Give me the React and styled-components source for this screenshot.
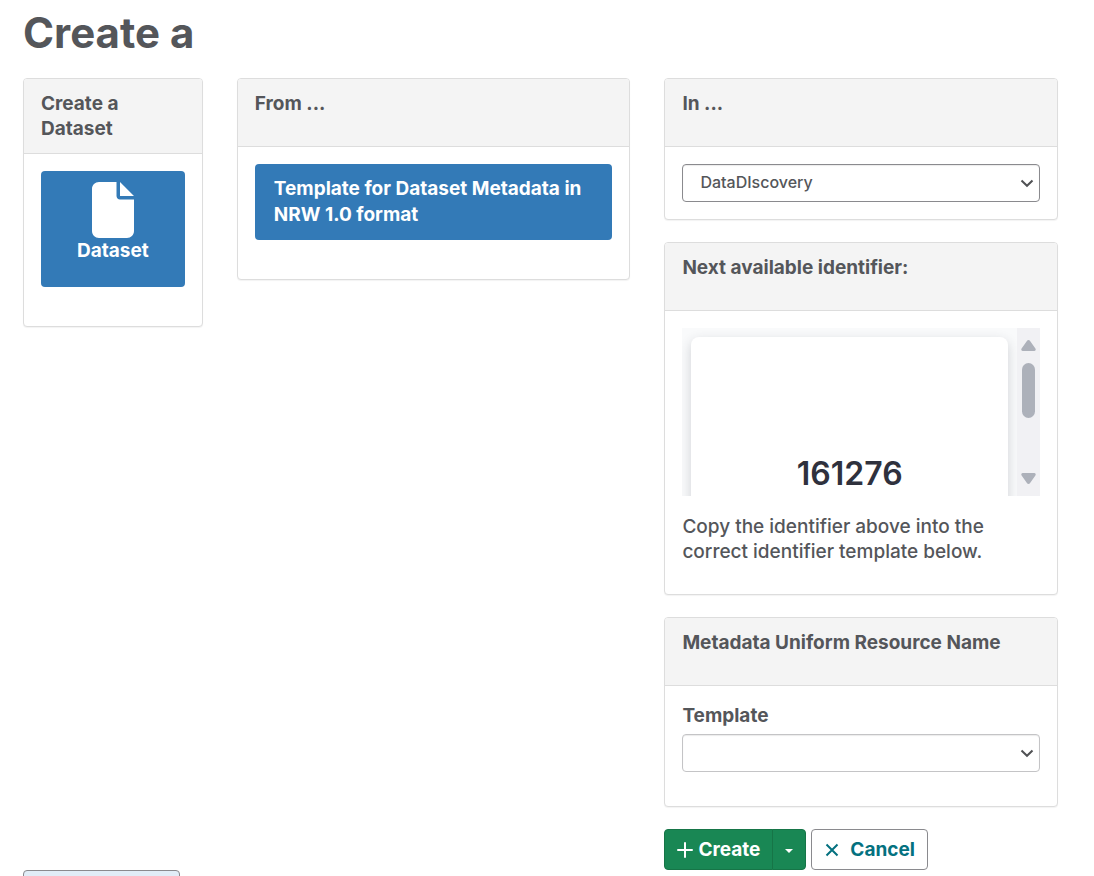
import React from "react";
import styled, { createGlobalStyle } from "styled-components";

const GlobalStyle = createGlobalStyle`
  *, *::before, *::after { box-sizing: border-box; }
  body {
    margin: 0;
    background: #fff;
    color: #54565a;
    font: 500 19px/25px Inter, "Liberation Sans", sans-serif;
  }
  button, select { font: inherit; color: inherit; }
`;

const Page = styled.main`
  padding: 10px 19px 0 6px;
`;

const Title = styled.h1`
  margin: 0 17px 22px;
  font-size: 42px;
  line-height: 46px;
  font-weight: 700;
`;

const Columns = styled.div`
  display: grid;
  grid-template-columns: minmax(0, 1fr) minmax(0, 2fr) minmax(0, 2fr);
  align-items: start;
`;

const Column = styled.div`
  padding: 0 17px;
`;

const Panel = styled.section`
  margin-bottom: 22px;
  border: 1px solid #ddd;
  border-radius: 4px;
  background: #fff;
  box-shadow: 0 1px 1px rgba(0, 0, 0, 0.05);
`;

const PanelHeading = styled.h2`
  margin: 0;
  min-height: 68px;
  padding: 12px 17px;
  border-bottom: 1px solid #ddd;
  border-radius: 3px 3px 0 0;
  background: #f4f4f4;
  font-size: 19px;
  line-height: 25px;
  font-weight: 700;
`;

const PanelBody = styled.div`
  padding: 17px 17px ${(p) => p.$bottom || 17}px;
`;

const KindButton = styled.button`
  display: flex;
  flex-direction: column;
  align-items: center;
  width: 100%;
  height: 116px;
  padding: 11px 17px;
  border: 0;
  border-radius: 4px;
  background: #337ab7;
  color: #fff;
  font-weight: 700;
`;

const FileIcon = styled.svg`
  width: 42px;
  height: 56px;
`;

const TemplateButton = styled.button`
  display: block;
  width: 100%;
  padding: 12px 19px;
  border: 0;
  border-radius: 4px;
  background: #337ab7;
  color: #fff;
  font-weight: 700;
  line-height: 26px;
  text-align: left;
`;

const SelectBox = styled.div`
  display: grid;
  grid-template-columns: 1fr 20px;
  align-items: center;
`;

const Select = styled.select`
  grid-area: 1 / 1 / 2 / 3;
  width: 100%;
  height: 38px;
  padding: 0 17px 2px;
  border: 1px solid ${(p) => (p.$strong ? "#8a8a8e" : "#c4c4c6")};
  border-radius: 4px;
  background: #fff;
  box-shadow: inset 0 1px 1px rgba(0, 0, 0, 0.08);
  font-size: 16px;
  appearance: none;
`;

const Chevron = styled.svg`
  grid-area: 1 / 2 / 2 / 3;
  width: 14px;
  height: 10px;
  pointer-events: none;
`;

const Label = styled.label`
  display: block;
  margin-bottom: 6px;
  font-weight: 700;
`;

const Viewer = styled.div`
  display: flex;
  height: 168px;
  margin-bottom: 18px;
  overflow: hidden;
  background: #f9fafb;
`;

const Sheet = styled.div`
  display: flex;
  flex: 1;
  justify-content: center;
  height: 260px;
  margin: 9px 9px 0;
  padding-top: 119px;
  border-radius: 8px;
  background: #fff;
  box-shadow: 0 4px 12px rgba(45, 50, 66, 0.2);
  color: #2f313d;
  font-size: 32px;
  line-height: 36px;
  font-weight: 600;
`;

const ScrollTrack = styled.div`
  display: flex;
  flex-direction: column;
  align-items: center;
  width: 23px;
  padding: 12px 0;
  background: #f1f1f4;
`;

const ScrollThumb = styled.div`
  width: 13px;
  height: 55px;
  margin: 12px 0 55px;
  border-radius: 7px;
  background: #adb1ba;
`;

const ScrollArrow = styled.svg`
  width: 15px;
  height: 11px;
  fill: #adb1ba;
`;

const Hint = styled.p`
  margin: 0;
`;

const Actions = styled.div`
  display: flex;
  gap: 5px;
`;

const SplitButton = styled.div`
  display: flex;
`;

const ActionButton = styled.button`
  display: flex;
  align-items: center;
  justify-content: center;
  gap: ${(p) => p.$gap || 5}px;
  height: 41px;
  padding: 0 12px;
  border: 1px solid #8a8a8e;
  border-radius: 4px;
  background: #fff;
  color: #04717f;
  font-weight: 700;
`;

const CreateButton = styled(ActionButton)`
  border-color: #167547;
  border-radius: 4px 0 0 4px;
  background: #198754;
  color: #fff;
`;

const CreateMenuButton = styled(CreateButton)`
  width: 34px;
  margin-left: -1px;
  padding: 0;
  border-radius: 0 4px 4px 0;
`;

const Glyph = styled.svg`
  flex: none;
  width: 16px;
  height: 16px;
`;

const FooterButton = styled.button`
  display: block;
  width: 157px;
  height: 41px;
  margin: 0 17px;
  border: 1px solid #8a8a8e;
  border-radius: 4px;
  background: #e1edf7;
`;

function DropDown({ id, label, strong, options }) {
  return (
    <SelectBox>
      <Select id={id} aria-label={label} $strong={strong}>
        {options.map((o) => (
          <option key={o}>{o}</option>
        ))}
      </Select>
      <Chevron viewBox="0 0 14 10" aria-hidden="true">
        <path d="M1.500 2.500 7 7.800 12.500 2.500" fill="none" stroke="#505154" strokeWidth="2" />
      </Chevron>
    </SelectBox>
  );
}

export default function App() {
  return (
    <>
      <GlobalStyle />
      <Page>
        <Title>Create a</Title>
        <Columns>
          <Column>
            <Panel>
              <PanelHeading>Create a Dataset</PanelHeading>
              <PanelBody $bottom={39}>
                <KindButton type="button">
                  <FileIcon viewBox="0 0 384 512" aria-hidden="true">
                    <path
                      fill="currentColor"
                      d="M224 0v128c0 17.700 14.300 32 32 32h128v288c0 35.300-28.700 64-64 64H64c-35.300 0-64-28.700-64-64V64C0 28.700 28.700 0 64 0h160zm32 0 128 128H256V0z"
                    />
                  </FileIcon>
                  Dataset
                </KindButton>
              </PanelBody>
            </Panel>
          </Column>
          <Column>
            <Panel>
              <PanelHeading>From ...</PanelHeading>
              <PanelBody $bottom={39}>
                <TemplateButton type="button">
                  Template for Dataset Metadata in NRW 1.0 format
                </TemplateButton>
              </PanelBody>
            </Panel>
          </Column>
          <Column>
            <Panel>
              <PanelHeading>In ...</PanelHeading>
              <PanelBody>
                <DropDown label="In" strong options={["DataDIscovery"]} />
              </PanelBody>
            </Panel>
            <Panel>
              <PanelHeading>Next available identifier:</PanelHeading>
              <PanelBody $bottom={30}>
                <Viewer>
                  <Sheet>161276</Sheet>
                  <ScrollTrack>
                    <ScrollArrow viewBox="0 0 15 11" aria-hidden="true">
                      <path d="M7.500 0q1 0 1.600 1l5.300 7.500q1 2-1 2.500H1.600q-2-.5-1-2.500L5.900 1q.6-1 1.600-1z" />
                    </ScrollArrow>
                    <ScrollThumb />
                    <ScrollArrow viewBox="0 0 15 11" aria-hidden="true">
                      <path d="M7.500 11q1 0 1.600-1l5.300-7.500q1-2-1-2.500H1.600q-2 .5-1 2.500L5.900 10q.6 1 1.600 1z" />
                    </ScrollArrow>
                  </ScrollTrack>
                </Viewer>
                <Hint>
                  Copy the identifier above into the correct identifier template below.
                </Hint>
              </PanelBody>
            </Panel>
            <Panel>
              <PanelHeading>Metadata Uniform Resource Name</PanelHeading>
              <PanelBody $bottom={34}>
                <Label htmlFor="urn-template">Template</Label>
                <DropDown id="urn-template" options={[""]} />
              </PanelBody>
            </Panel>
            <Actions>
              <SplitButton>
                <CreateButton type="button">
                  <Glyph viewBox="0 0 16 16" aria-hidden="true">
                    <path d="M8 1v14M1 8h14" stroke="currentColor" strokeWidth="2" strokeLinecap="round" />
                  </Glyph>
                  Create
                </CreateButton>
                <CreateMenuButton type="button" aria-label="More create options">
                  <Glyph viewBox="0 0 16 16" aria-hidden="true">
                    <path d="M4 7h8l-4 4z" fill="currentColor" />
                  </Glyph>
                </CreateMenuButton>
              </SplitButton>
              <ActionButton type="button" $gap={10}>
                <Glyph viewBox="0 0 16 16" aria-hidden="true">
                  <path d="m2.500 2.500 11 11m0-11-11 11" stroke="currentColor" strokeWidth="2" />
                </Glyph>
                Cancel
              </ActionButton>
            </Actions>
          </Column>
        </Columns>
        <FooterButton type="button" aria-label="Footer action" />
      </Page>
    </>
  );
}
